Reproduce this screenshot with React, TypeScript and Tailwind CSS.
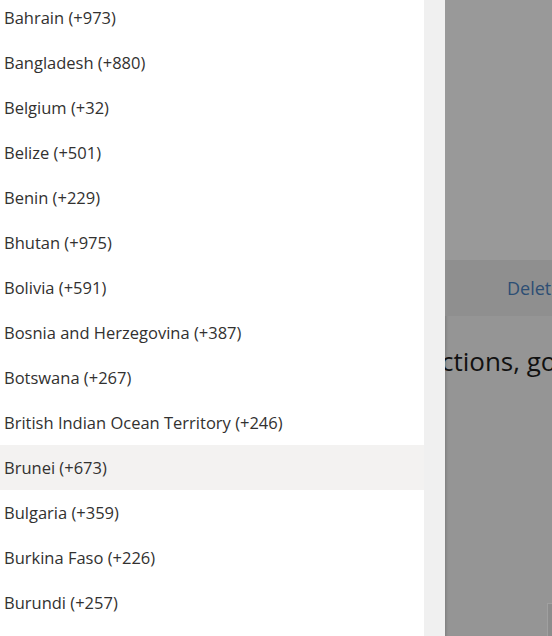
import React from 'react';

const countries = [
  'Bahrain (+973)',
  'Bangladesh (+880)',
  'Belgium (+32)',
  'Belize (+501)',
  'Benin (+229)',
  'Bhutan (+975)',
  'Bolivia (+591)',
  'Bosnia and Herzegovina (+387)',
  'Botswana (+267)',
  'British Indian Ocean Territory (+246)',
  'Brunei (+673)',
  'Bulgaria (+359)',
  'Burkina Faso (+226)',
  'Burundi (+257)',
];

export default function App() {
  return (
    <div
      className="flex h-[636px] w-[552px] overflow-hidden"
      style={{ fontFamily: '"Open Sans", "Noto Sans", sans-serif' }}
    >
      {/* Country list panel */}
      <div className="w-[424px] shrink-0 overflow-hidden bg-white">
        <ul className="-mt-[5px]">
          {countries.map((c) => (
            <li
              key={c}
              className={`flex h-[45px] items-center pl-[4px] pt-[2px] text-[16.5px] text-[#323130] ${
                c.startsWith('Brunei') ? 'bg-[#f3f2f1]' : ''
              }`}
            >
              {c}
            </li>
          ))}
        </ul>
      </div>

      {/* Scrollbar track */}
      <div className="w-[21px] shrink-0 bg-[#f0f0f0]" />

      {/* Dimmed page behind */}
      <div className="relative flex flex-1 flex-col overflow-hidden bg-[#959595] shadow-[inset_3px_0_3px_-2px_rgba(0,0,0,0.18)]">
        <div className="h-[260px] bg-[#999999]" />
        <div className="flex h-[56px] items-center bg-[#8f8f8f] pl-[62px]">
          <span className="whitespace-nowrap text-[18px] text-[#2d4e74]">Delete</span>
        </div>
        <div className="mt-[28px] whitespace-nowrap text-[26px] leading-[34px] text-[#111]">
          <span className="-ml-[4px]">ctions, go to</span>
        </div>
        <div className="absolute left-[102px] top-[603px] h-[40px] w-[40px] border-t border-l border-[#a0a0a0] bg-[#8c8c8c]" />
      </div>
    </div>
  );
}
